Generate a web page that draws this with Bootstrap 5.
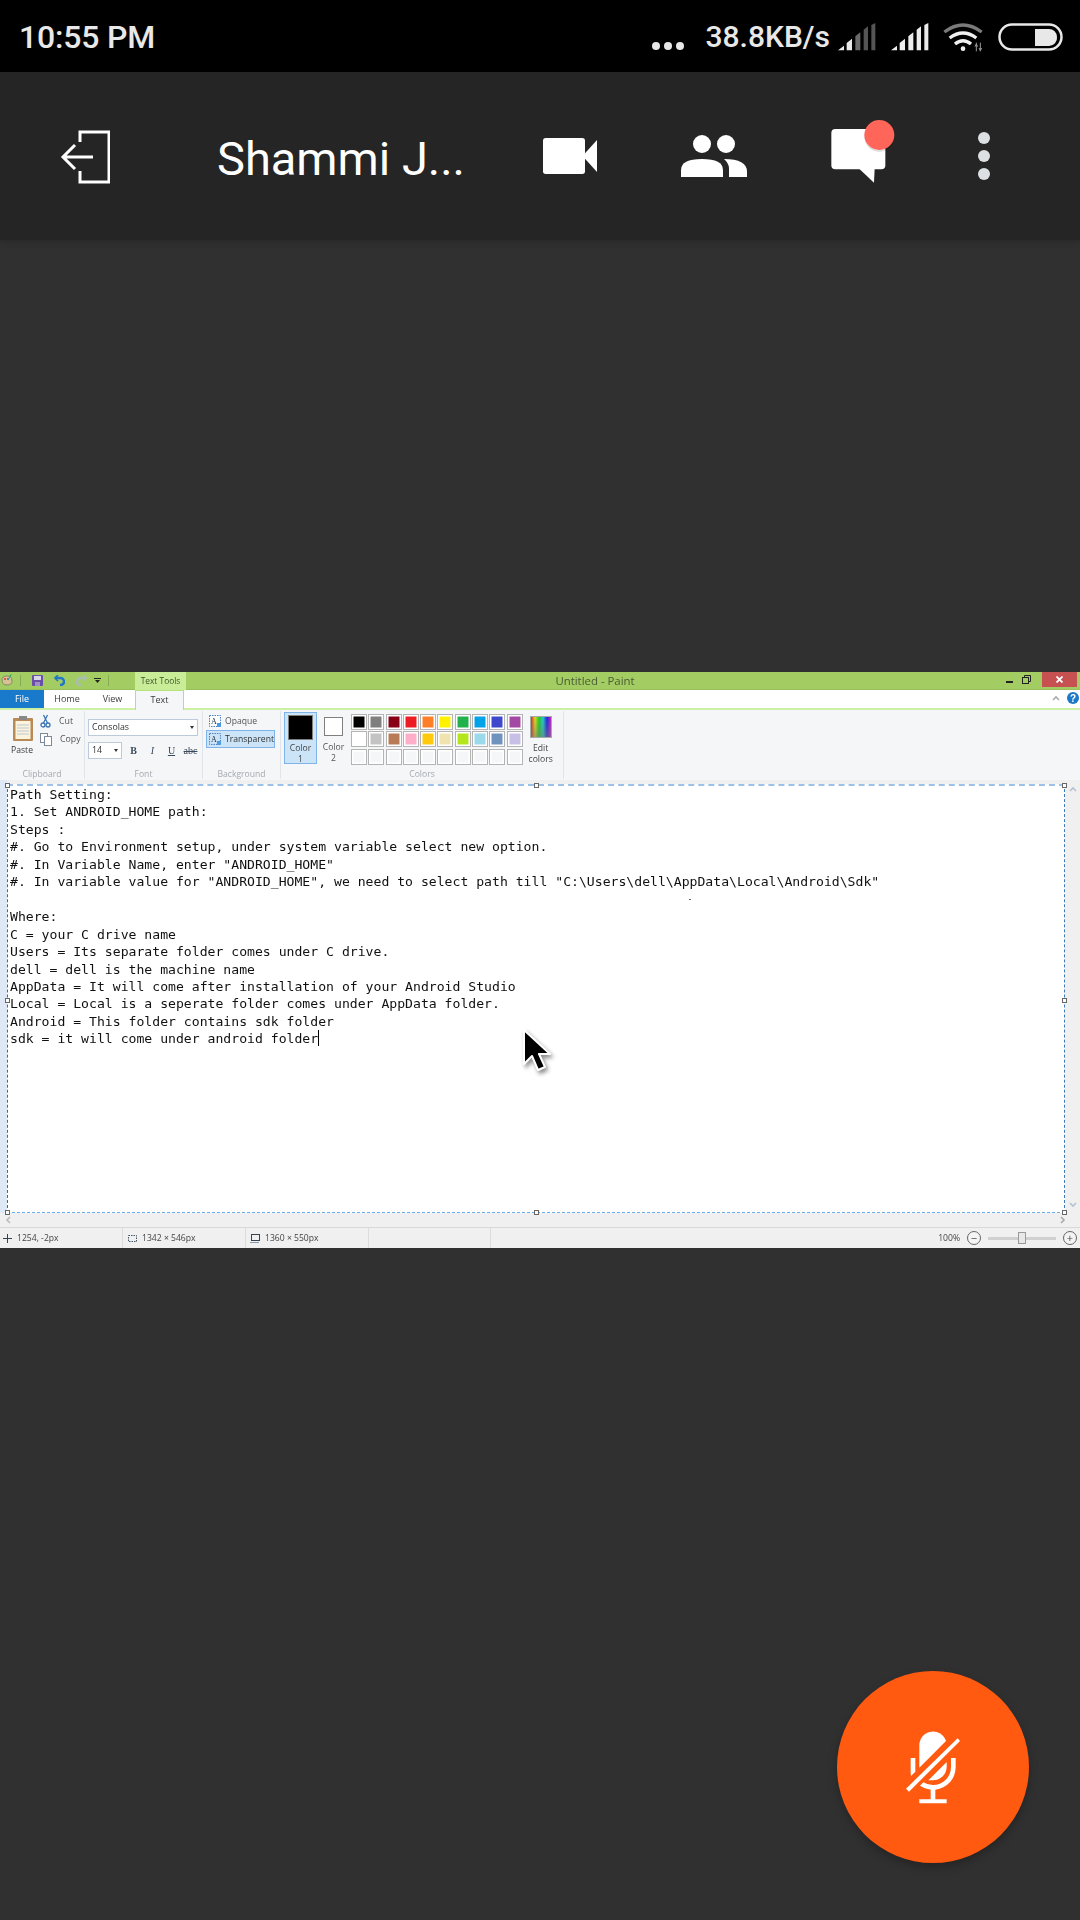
<!DOCTYPE html>
<html lang="en">
<head>
<meta charset="utf-8">
<title>Meeting</title>
<link href="https://cdn.jsdelivr.net/npm/bootstrap@5.3.0/dist/css/bootstrap.min.css" rel="stylesheet">
<style>
html,body{width:1080px;height:1920px;margin:0;overflow:hidden;background:#303030}
.screen{width:1080px;height:1920px;position:relative;font-family:Roboto,sans-serif}
.sbar{height:72px;background:#000;color:#e8e8e8;padding:2px 17px 0 19px}
.sbar-time{font-size:32px;font-weight:500;line-height:1;letter-spacing:-.2px}
.sbar-speed{font-size:30px;font-weight:500;line-height:1;margin:0 8px 0 21px}
.sbar-dots{margin-top:18px}
.sig-a{margin-right:15px}.sig-b{margin-right:14px}.wifi-ico{margin-right:15px}
.mhead{height:168px;background:#252525;color:#fff;box-shadow:0 2px 6px rgba(0,0,0,.18);padding-left:60px;position:relative}
.mh-exit{margin-top:2px}
.mname{font-size:47px;line-height:1;margin-left:107px;width:326px;white-space:nowrap;font-weight:400;padding-top:4px}
.mh-people{margin-left:84px}.mh-chat{margin-left:84px}.mh-dots{margin-left:83px}
.paintwin{margin-top:432px;height:576px;background:#f0f0f0;font-family:"Open Sans",sans-serif;font-size:8.6px;color:#444;line-height:1;filter:blur(.25px)}
.ptitle{height:18px;background:#a3cd63;border-bottom:1px solid #97bf5c}
.pqa{width:135px;padding-left:1px;gap:7px}
.pqa-sep{width:1px;height:11px;background:#8aa955}
.ptools{width:51px;height:18px;background:#c8ec98;color:#41562b;text-align:center;line-height:17px;font-size:8.4px}
.ptitle-txt{flex:1;text-align:center;color:#4a5a35;font-size:11.4px}
.pctrls{width:76px;height:15px;align-self:flex-start;justify-content:flex-end;padding-right:3px}
.pclose{width:35px;height:15px;background:#c75050;color:#fff;display:flex;align-items:center;justify-content:center;margin-left:11px}
.ptabs{height:20px;background:#fff;border-bottom:2px solid #cdf0a5;position:relative;font-size:9px;color:#3b3b3b}
.ptab{height:18px;line-height:18px;text-align:center}
.ptab-file{width:44px;background:#1979ca;color:#fff}
.ptab-home{width:46px}.ptab-view{width:45px}
.ptab-text{width:49px;height:20px;background:#f5f6f7;border:1px solid #b4e27c;border-bottom:0}
.ptab-tail{margin-left:auto;gap:7px;padding:0 1px 2px 0}
.prib{height:70px;background:#f5f6f7}
.rgroup{height:68px;margin-top:1px;border-right:1px solid #e1e4e8;position:relative;padding-bottom:13px}
.rlabel{position:absolute;left:0;right:0;bottom:0;text-align:center;color:#a3aab1;font-size:8.6px}
.rg-clip{width:85px}.rg-font{width:118px;padding:8px 0 0 3px}.rg-back{width:78px;padding-top:1px}.rg-col{width:283px;padding:1px 0 0 3px}
.rclip-paste{width:38px;padding:4px 0 0 8px;text-align:center;font-size:8.6px;color:#3b3b3b}
.rclip-paste span{display:block;margin-top:5px;margin-left:-2px}
.rclip-col{padding-top:1px;margin-left:2px}
.rclip-row{height:18px;gap:4px;padding-left:0;font-size:8.8px;color:#555;white-space:nowrap}
.rcombo{background:#fff;border:1px solid #bccadb;height:17px;display:flex;align-items:center;padding:0 3px;font-size:8.8px;color:#333;position:relative;width:110px;justify-content:space-between}
.rcombo-sz{width:34px}
.rcaret{width:0;height:0;border-left:2px solid transparent;border-right:2px solid transparent;border-top:3px solid #333}
.rfmt{gap:0;margin-top:6px;height:17px}
.rfmt b,.rfmt i,.rfmt u,.rfmt s{font-family:"Liberation Serif",serif;font-size:10px;color:#3b4a5a;width:19px;text-align:center}
.rfmt b.rfmt-first{margin-left:2px}
.rbg-row{height:18px;margin:0 5px 0 3px;padding-left:2px;gap:4px;font-size:8.6px;color:#555;border:1px solid transparent}
.rbg-on{background:#cce4f7;border-color:#7eb4ea;color:#333}
.colbtn{width:33px;height:52px;background:#cce4f7;border:1px solid #7eb4ea;text-align:center;font-size:8.6px;line-height:10.5px;color:#444}
.colbtn-sw{display:block;width:25px;height:25px;background:#000;border:1px solid #7f7f7f;margin:2px auto 3px}
.colbtn2{width:33px;height:52px;text-align:center;font-size:8.6px;line-height:10.5px;color:#555;margin-right:1px}
.colbtn2-sw{display:block;width:19px;height:19px;background:#fff;border:1px solid #7f7f7f;margin:5px auto 6px}
.palette{display:grid;grid-template-columns:repeat(10,16px);grid-auto-rows:16px;gap:1.3px;margin-top:2px;height:50px}
.psw{border:1px solid #b4b4b4;box-shadow:inset 0 0 0 1.5px #fff;background:#f5f6f7}
.palette .psw:nth-child(1){background:#000}.palette .psw:nth-child(2){background:#7f7f7f}.palette .psw:nth-child(3){background:#880015}.palette .psw:nth-child(4){background:#ed1c24}.palette .psw:nth-child(5){background:#ff7f27}.palette .psw:nth-child(6){background:#fff200}.palette .psw:nth-child(7){background:#22b14c}.palette .psw:nth-child(8){background:#00a2e8}.palette .psw:nth-child(9){background:#3f48cc}.palette .psw:nth-child(10){background:#a349a4}.palette .psw:nth-child(11){background:#fff}.palette .psw:nth-child(12){background:#c3c3c3}.palette .psw:nth-child(13){background:#b97a57}.palette .psw:nth-child(14){background:#ffaec9}.palette .psw:nth-child(15){background:#ffc90e}.palette .psw:nth-child(16){background:#efe4b0}.palette .psw:nth-child(17){background:#b5e61d}.palette .psw:nth-child(18){background:#99d9ea}.palette .psw:nth-child(19){background:#7092be}.palette .psw:nth-child(20){background:#c8bfe7}
.editcol{width:30px;margin-left:3px;text-align:center;font-size:8.6px;line-height:10.5px;color:#444}
.editcol-ico{display:block;width:22px;height:22px;margin:4px auto 5px;border:1px solid #a9a9a9;background:linear-gradient(to bottom,rgba(255,255,255,0),rgba(120,120,120,.55) 100%),linear-gradient(to right,#d22,#dd2,#2c2,#2cc,#22d,#c2c)}
.pwork{height:434px}
.pgutter{width:7px;background:#dfe9f6;flex:none;padding-top:2px}
.pcanvas{flex:1;background:#fff;position:relative;margin-top:4px;height:429px;border-left:1px dashed #52647a;border-right:1px dashed #3f7ab8;border-top:2px dashed #9cc2ea;border-bottom:1px dashed #63aff2}
.ptext{font-family:"DejaVu Sans Mono","Liberation Mono",monospace;font-size:13.13px;line-height:17.45px;color:#111;margin:0;padding:0 0 0 2px;overflow:visible;white-space:pre}
.pcaret{display:inline-block;width:1px;height:16px;background:#000;vertical-align:-3px}
.phandle{position:absolute;width:5px;height:5px;background:#fff;border:1px solid #666}
.ph-tl{left:-3px;top:-3px}.ph-t{left:526px;top:-3px}.ph-tr{right:-3px;top:-3px}.ph-l{left:-3px;top:212px}.ph-r{right:-3px;top:212px}.ph-bl{left:-3px;bottom:-3px}.ph-b{left:526px;bottom:-3px}.ph-br{right:-3px;bottom:-3px}
.pspeck{position:absolute;left:681px;top:113px;width:2px;height:1px;background:#666}
.pcursor{position:absolute;left:513px;top:242px;filter:drop-shadow(2px 3px 2px rgba(0,0,0,.45))}
.pvscroll{width:14px;flex:none;margin-left:1px;background:#f0f0f0;padding-top:6px;align-items:center;justify-content:space-between;padding-bottom:6px}
.phscroll{height:14px;background:#f0f0f0;padding:0 14px 0 5px;justify-content:space-between;margin-top:-1px}
.pstatus{height:21px;background:#f0f0f0;border-top:1px solid #d9d9d9;font-size:8.6px;color:#444}
.pcell{width:123px;height:20px;border-right:1px solid #dcdcdc;padding-left:3px;gap:5px;white-space:nowrap}
.pcell-gap{width:122px}
.pzoom{margin-left:auto;gap:7px;padding-right:3px}
.zslider{width:68px;height:3px;background:#d0d0d0;position:relative}
.zthumb{position:absolute;left:30px;top:-5px;width:8px;height:12px;background:#e8e8e8;border:1px solid #9a9a9a}
.zbtn{width:14px;height:14px;border:1px solid #666;border-radius:50%;font-size:11px;line-height:11px;text-align:center;color:#444;background:#f4f4f4;display:block}
.fab{position:absolute;left:837px;top:1671px;width:192px;height:192px;border-radius:50%;background:#ff5a10;box-shadow:0 4px 8px rgba(0,0,0,.25)}
</style>
</head>
<body>
<div class="screen d-flex flex-column">
  <div class="sbar d-flex align-items-center flex-shrink-0">
    <span class="sbar-time">10:55 PM</span>
    <div class="d-flex align-items-center ms-auto">
      <svg class="sbar-dots" width="32" height="10" viewBox="0 0 32 10"><circle cx="4" cy="5" r="4" fill="#e8e8e8"/><circle cx="16" cy="5" r="4" fill="#e8e8e8"/><circle cx="28" cy="5" r="4" fill="#e8e8e8"/></svg>
      <span class="sbar-speed">38.8KB/s</span>
      <svg class="sig-a" width="38" height="28" viewBox="0 0 114 84" fill="#e8e8e8"><path d="M0 82 18 68V82Z"/><path d="M26 60 42 47V82H26Z"/><path d="M52 40 67 28V82H52Z" fill="#6a6a6a"/><path d="M77 20 90 10V82H77Z" fill="#555"/><path d="M100 6 112 0V82H100Z" fill="#555"/></svg>
      <svg class="sig-b" width="38" height="28" viewBox="0 0 114 84" fill="#ececec"><path d="M0 82 18 68V82Z"/><path d="M26 60 42 47V82H26Z"/><path d="M52 40 67 28V82H52Z"/><path d="M77 20 90 10V82H77Z"/><path d="M100 6 112 0V82H100Z"/></svg>
      <svg class="wifi-ico" width="40" height="30" viewBox="0 0 120 90" fill="none" stroke-width="10"><path d="M4 30Q60-12 116 30" stroke="#7a7a7a"/><path d="M20 48Q60 18 100 48" stroke="#f0f0f0"/><path d="M36 66Q60 46 84 66" stroke="#f0f0f0"/><circle cx="60" cy="80" r="7" fill="#f0f0f0" stroke="none"/><path d="M100 62V88M112 62V88M96 74 100 66 104 74M108 78 112 86 116 78" stroke="#999" stroke-width="3"/></svg>
      <svg width="65" height="28" viewBox="0 0 65 28"><rect x="1.5" y="1.5" width="62" height="25" rx="12.5" fill="none" stroke="#e8e8e8" stroke-width="2.5"/><path d="M37 6H51A8 8 0 0 1 59 14A8 8 0 0 1 51 23H37Z" fill="#e8e8e8"/></svg>
    </div>
  </div>
  <div class="mhead d-flex align-items-center flex-shrink-0">
    <svg class="mh-exit" width="50" height="54" viewBox="0 0 50 54" fill="none" stroke="#fff" stroke-width="3"><path d="M20 12V2H49V52H20V41"/><path d="M33 27H3M15 15 3 27 15 39"/></svg>
    <span class="mname">Shammi J...</span>
    <svg width="54" height="36" viewBox="39 69 162 108" fill="#fff"><rect x="39" y="69" width="126" height="108" rx="8"/><path d="M165 115 201 75V171L165 131Z"/></svg>
    <svg class="mh-people" width="66" height="42" viewBox="453 60 198 126" fill="#fff"><circle cx="516" cy="87" r="27"/><circle cx="588" cy="87" r="27"/><path d="M453 186V165Q453 132 516 132 579 132 579 165V186Z"/><path d="M597 186V160Q597 145 582 132 651 132 651 170V186Z"/></svg>
    <svg class="mh-chat" width="64" height="72" viewBox="48 15 190 216"><rect x="48" y="42" width="162" height="121" rx="12" fill="#fff"/><path d="M130 160 176 203 178 160Z" fill="#fff"/><circle cx="192" cy="66" r="45" fill="#000" opacity=".12"/><circle cx="192" cy="60" r="45" fill="#ff6558"/></svg>
    <svg class="mh-dots" width="12" height="48" viewBox="0 0 12 48" fill="#dde0e3"><circle cx="6" cy="6" r="6"/><circle cx="6" cy="24" r="6"/><circle cx="6" cy="42" r="6"/></svg>
  </div>
  <div class="paintwin d-flex flex-column flex-shrink-0">
    <div class="ptitle d-flex align-items-center">
      <div class="pqa d-flex align-items-center">
        <svg width="12" height="13" viewBox="0 0 12 13"><path d="M1 6Q1 2 6 2T11 7Q11 11 6 11T1 6Z" fill="#d9c28f" stroke="#7c8c70"/><circle cx="4" cy="5" r="1" fill="#d33"/><circle cx="7" cy="5" r="1" fill="#36c"/><path d="M9 1 11 0 7 7Z" fill="#2a6"/></svg>
        <span class="pqa-sep"></span>
        <svg width="11" height="11" viewBox="0 0 11 11" class="ms-1"><rect width="11" height="11" rx="1" fill="#6b4fa6"/><rect x="2" y="1" width="7" height="4" fill="#d8d4ea"/><rect x="3" y="7" width="5" height="4" fill="#9f8fcb"/></svg>
        <svg width="11" height="11" viewBox="0 0 11 11" class="ms-1" fill="none" stroke="#2178c4" stroke-width="2.4"><path d="M2 3H6Q10 3 10 7 10 10 6 10"/><path d="M4 0 1 3 4 6" stroke-width="1.6"/></svg>
        <svg width="11" height="11" viewBox="0 0 11 11" class="ms-1" fill="none" stroke="#a9bdb0" stroke-width="2.4"><path d="M9 3H5Q1 3 1 7 1 10 5 10"/><path d="M7 0 10 3 7 6" stroke-width="1.6"/></svg>
        <svg width="7" height="6" viewBox="0 0 7 6" fill="#222"><rect width="7" height="1"/><path d="M1 2H6L3.5 5Z"/></svg>
        <span class="pqa-sep"></span>
      </div>
      <div class="ptools">Text Tools</div>
      <div class="ptitle-txt">Untitled - Paint</div>
      <div class="pctrls d-flex align-items-center">
        <svg width="8" height="8" viewBox="0 0 8 8" class="me-2"><rect y="5" width="7" height="2" fill="#222"/></svg>
        <svg width="9" height="9" viewBox="0 0 9 9" fill="none" stroke="#222"><rect x=".5" y="2.5" width="6" height="6"/><path d="M2.5 2.5V.5H8.5V6.5H6.5"/></svg>
        <div class="pclose"><svg width="7" height="7" viewBox="0 0 7 7" stroke="#fff" stroke-width="1.8"><path d="M.5.5 6.5 6.5M6.5.5.5 6.5"/></svg></div>
      </div>
    </div>
    <div class="ptabs d-flex">
      <div class="ptab ptab-file">File</div>
      <div class="ptab ptab-home">Home</div>
      <div class="ptab ptab-view">View</div>
      <div class="ptab ptab-text">Text</div>
      <div class="ptab-tail d-flex align-items-center">
        <svg width="8" height="6" viewBox="0 0 8 6" fill="none" stroke="#aaa" stroke-width="1.6"><path d="M1 5 4 2 7 5"/></svg>
        <svg width="12" height="12" viewBox="0 0 12 12"><circle cx="6" cy="6" r="6" fill="#1e78c8"/><text x="6" y="9.5" text-anchor="middle" font-size="10" font-weight="700" fill="#fff" font-family="Liberation Sans">?</text></svg>
      </div>
    </div>
    <div class="prib d-flex">
      <div class="rgroup rg-clip d-flex">
        <div class="rclip-paste">
          <svg width="22" height="26" viewBox="0 0 22 26"><rect x="1" y="3" width="20" height="23" rx="1" fill="#b98a55"/><rect x="3.500" y="6" width="15" height="18" fill="#fbf3dc"/><path d="M5 10H17M5 13H17M5 16H17M5 19H17" stroke="#bdc7d5"/><rect x="7" y="1" width="8" height="4" fill="#888"/></svg>
          <span>Paste</span>
        </div>
        <div class="rclip-col d-flex flex-column">
          <div class="rclip-row d-flex align-items-center"><svg width="11" height="14" viewBox="0 0 11 14" fill="none" stroke="#3a76b4" stroke-width="1.300"><circle cx="3" cy="11" r="2"/><circle cx="8" cy="11" r="2"/><path d="M3.500 9 7.500 1M7.500 9 3.500 1"/></svg><span class="ms-1">Cut</span></div>
          <div class="rclip-row d-flex align-items-center"><svg width="12" height="13" viewBox="0 0 12 13" fill="#fff" stroke="#7e8a97"><rect x=".5" y=".5" width="7" height="9"/><rect x="4.500" y="3.500" width="7" height="9"/></svg><span class="ms-1">Copy</span></div>
        </div>
        <div class="rlabel">Clipboard</div>
      </div>
      <div class="rgroup rg-font">
        <div class="rcombo"><span>Consolas</span><span class="rcaret"></span></div>
        <div class="rfmt d-flex align-items-center">
          <div class="rcombo rcombo-sz"><span>14</span><span class="rcaret"></span></div>
          <b class="rfmt-first">B</b><i>I</i><u>U</u><s>abc</s>
        </div>
        <div class="rlabel">Font</div>
      </div>
      <div class="rgroup rg-back">
        <div class="rbg-row d-flex align-items-center"><svg width="12" height="12" viewBox="0 0 12 12"><rect x=".5" y=".5" width="11" height="11" fill="#fff" stroke="#4d7fc0" stroke-dasharray="1.500 1"/><text x="5" y="9" font-size="8" font-family="Liberation Serif" text-anchor="middle" fill="#234">A</text><rect x="8" y="8" width="4" height="4" fill="#4d9be0"/></svg><span>Opaque</span></div>
        <div class="rbg-row rbg-on d-flex align-items-center"><svg width="12" height="12" viewBox="0 0 12 12"><rect x=".5" y=".5" width="11" height="11" fill="none" stroke="#4d7fc0" stroke-dasharray="1.500 1"/><text x="5" y="9" font-size="8" font-family="Liberation Serif" text-anchor="middle" fill="#234">A</text><rect x="8" y="8" width="4" height="4" fill="#4d9be0"/></svg><span>Transparent</span></div>
        <div class="rlabel">Background</div>
      </div>
      <div class="rgroup rg-col d-flex">
        <div class="colbtn"><span class="colbtn-sw"></span>Color<br>1</div>
        <div class="colbtn2"><span class="colbtn2-sw"></span>Color<br>2</div>
        <div class="palette">
          <span class="psw"></span><span class="psw"></span><span class="psw"></span><span class="psw"></span><span class="psw"></span><span class="psw"></span><span class="psw"></span><span class="psw"></span><span class="psw"></span><span class="psw"></span>
          <span class="psw"></span><span class="psw"></span><span class="psw"></span><span class="psw"></span><span class="psw"></span><span class="psw"></span><span class="psw"></span><span class="psw"></span><span class="psw"></span><span class="psw"></span>
          <span class="psw"></span><span class="psw"></span><span class="psw"></span><span class="psw"></span><span class="psw"></span><span class="psw"></span><span class="psw"></span><span class="psw"></span><span class="psw"></span><span class="psw"></span>
        </div>
        <div class="editcol"><span class="editcol-ico"></span>Edit<br>colors</div>
        <div class="rlabel">Colors</div>
      </div>
    </div>
    <div class="pwork d-flex">
      <div class="pgutter"></div>
      <div class="pcanvas">
        <pre class="ptext">Path Setting:
1. Set ANDROID_HOME path:
Steps :
#. Go to Environment setup, under system variable select new option.
#. In Variable Name, enter "ANDROID_HOME"
#. In variable value for "ANDROID_HOME", we need to select path till "C:\Users\dell\AppData\Local\Android\Sdk"

Where:
C = your C drive name
Users = Its separate folder comes under C drive.
dell = dell is the machine name
AppData = It will come after installation of your Android Studio
Local = Local is a seperate folder comes under AppData folder.
Android = This folder contains sdk folder
sdk = it will come under android folder<span class="pcaret"></span></pre>
        <span class="phandle ph-tl"></span><span class="phandle ph-t"></span><span class="phandle ph-tr"></span><span class="phandle ph-l"></span><span class="phandle ph-r"></span><span class="phandle ph-bl"></span><span class="phandle ph-b"></span><span class="phandle ph-br"></span>
        <span class="pspeck"></span>
        <svg class="pcursor" width="30" height="46" viewBox="0 0 30 46"><path d="M3 2V36L11 28 17 42 24 39 18 26H29Z" fill="#000" stroke="#fff" stroke-width="2" stroke-linejoin="round"/></svg>
      </div>
      <div class="pvscroll d-flex flex-column">
        <svg width="8" height="6" viewBox="0 0 8 6" fill="none" stroke="#b5c2cf" stroke-width="1.600"><path d="M1 5 4 2 7 5"/></svg>
        <svg width="8" height="6" viewBox="0 0 8 6" fill="none" stroke="#b5c2cf" stroke-width="1.600"><path d="M1 1 4 4 7 1"/></svg>
      </div>
    </div>
    <div class="phscroll d-flex align-items-center">
      <svg width="6" height="8" viewBox="0 0 6 8" fill="none" stroke="#bbb" stroke-width="1.600"><path d="M5 1 2 4 5 7"/></svg>
      <svg width="6" height="8" viewBox="0 0 6 8" fill="none" stroke="#aaa" stroke-width="1.600"><path d="M1 1 4 4 1 7"/></svg>
    </div>
    <div class="pstatus d-flex align-items-center">
      <div class="pcell d-flex align-items-center"><svg width="9" height="9" viewBox="0 0 9 9" stroke="#345"><path d="M4.500 0V9M0 4.500H9"/></svg><span>1254, -2px</span></div>
      <div class="pcell d-flex align-items-center"><svg width="11" height="10" viewBox="0 0 11 10" fill="none" stroke="#456" stroke-dasharray="1.500 1"><rect x="2.500" y="2.500" width="8" height="6"/></svg><span>1342 × 546px</span></div>
      <div class="pcell d-flex align-items-center"><svg width="11" height="10" viewBox="0 0 11 10" fill="none" stroke="#345"><rect x="2.500" y="1.500" width="8" height="6"/><path d="M1 10H10"/></svg><span>1360 × 550px</span></div>
      <div class="pcell pcell-gap"></div>
      <div class="pzoom d-flex align-items-center"><span>100%</span><span class="zbtn">−</span><span class="zslider"><span class="zthumb"></span></span><span class="zbtn">+</span></div>
    </div>
  </div>
  <div class="fab d-flex align-items-center justify-content-center">
    <svg width="60" height="80" viewBox="279 230 180 240" fill="#fff"><path d="M328 352V284A41 41 0 0 1 408 272Z"/><path d="M410 335V349A41 41 0 0 1 369 390H355Z"/><path d="M302 323H316V364L303 377Q302 372 302 365Z"/><path d="M423 323H437V350A68 68 0 0 1 376 418V447H410V459H328V447H362V418A68 68 0 0 1 330 406L340 396A54 54 0 0 0 369 404 54 54 0 0 0 423 350Z"/><path d="M443 264 450 272 297 424 288 415Z"/></svg>
  </div>
</div>
<script src="https://cdn.jsdelivr.net/npm/bootstrap@5.3.0/dist/js/bootstrap.bundle.min.js"></script>
</body>
</html>
